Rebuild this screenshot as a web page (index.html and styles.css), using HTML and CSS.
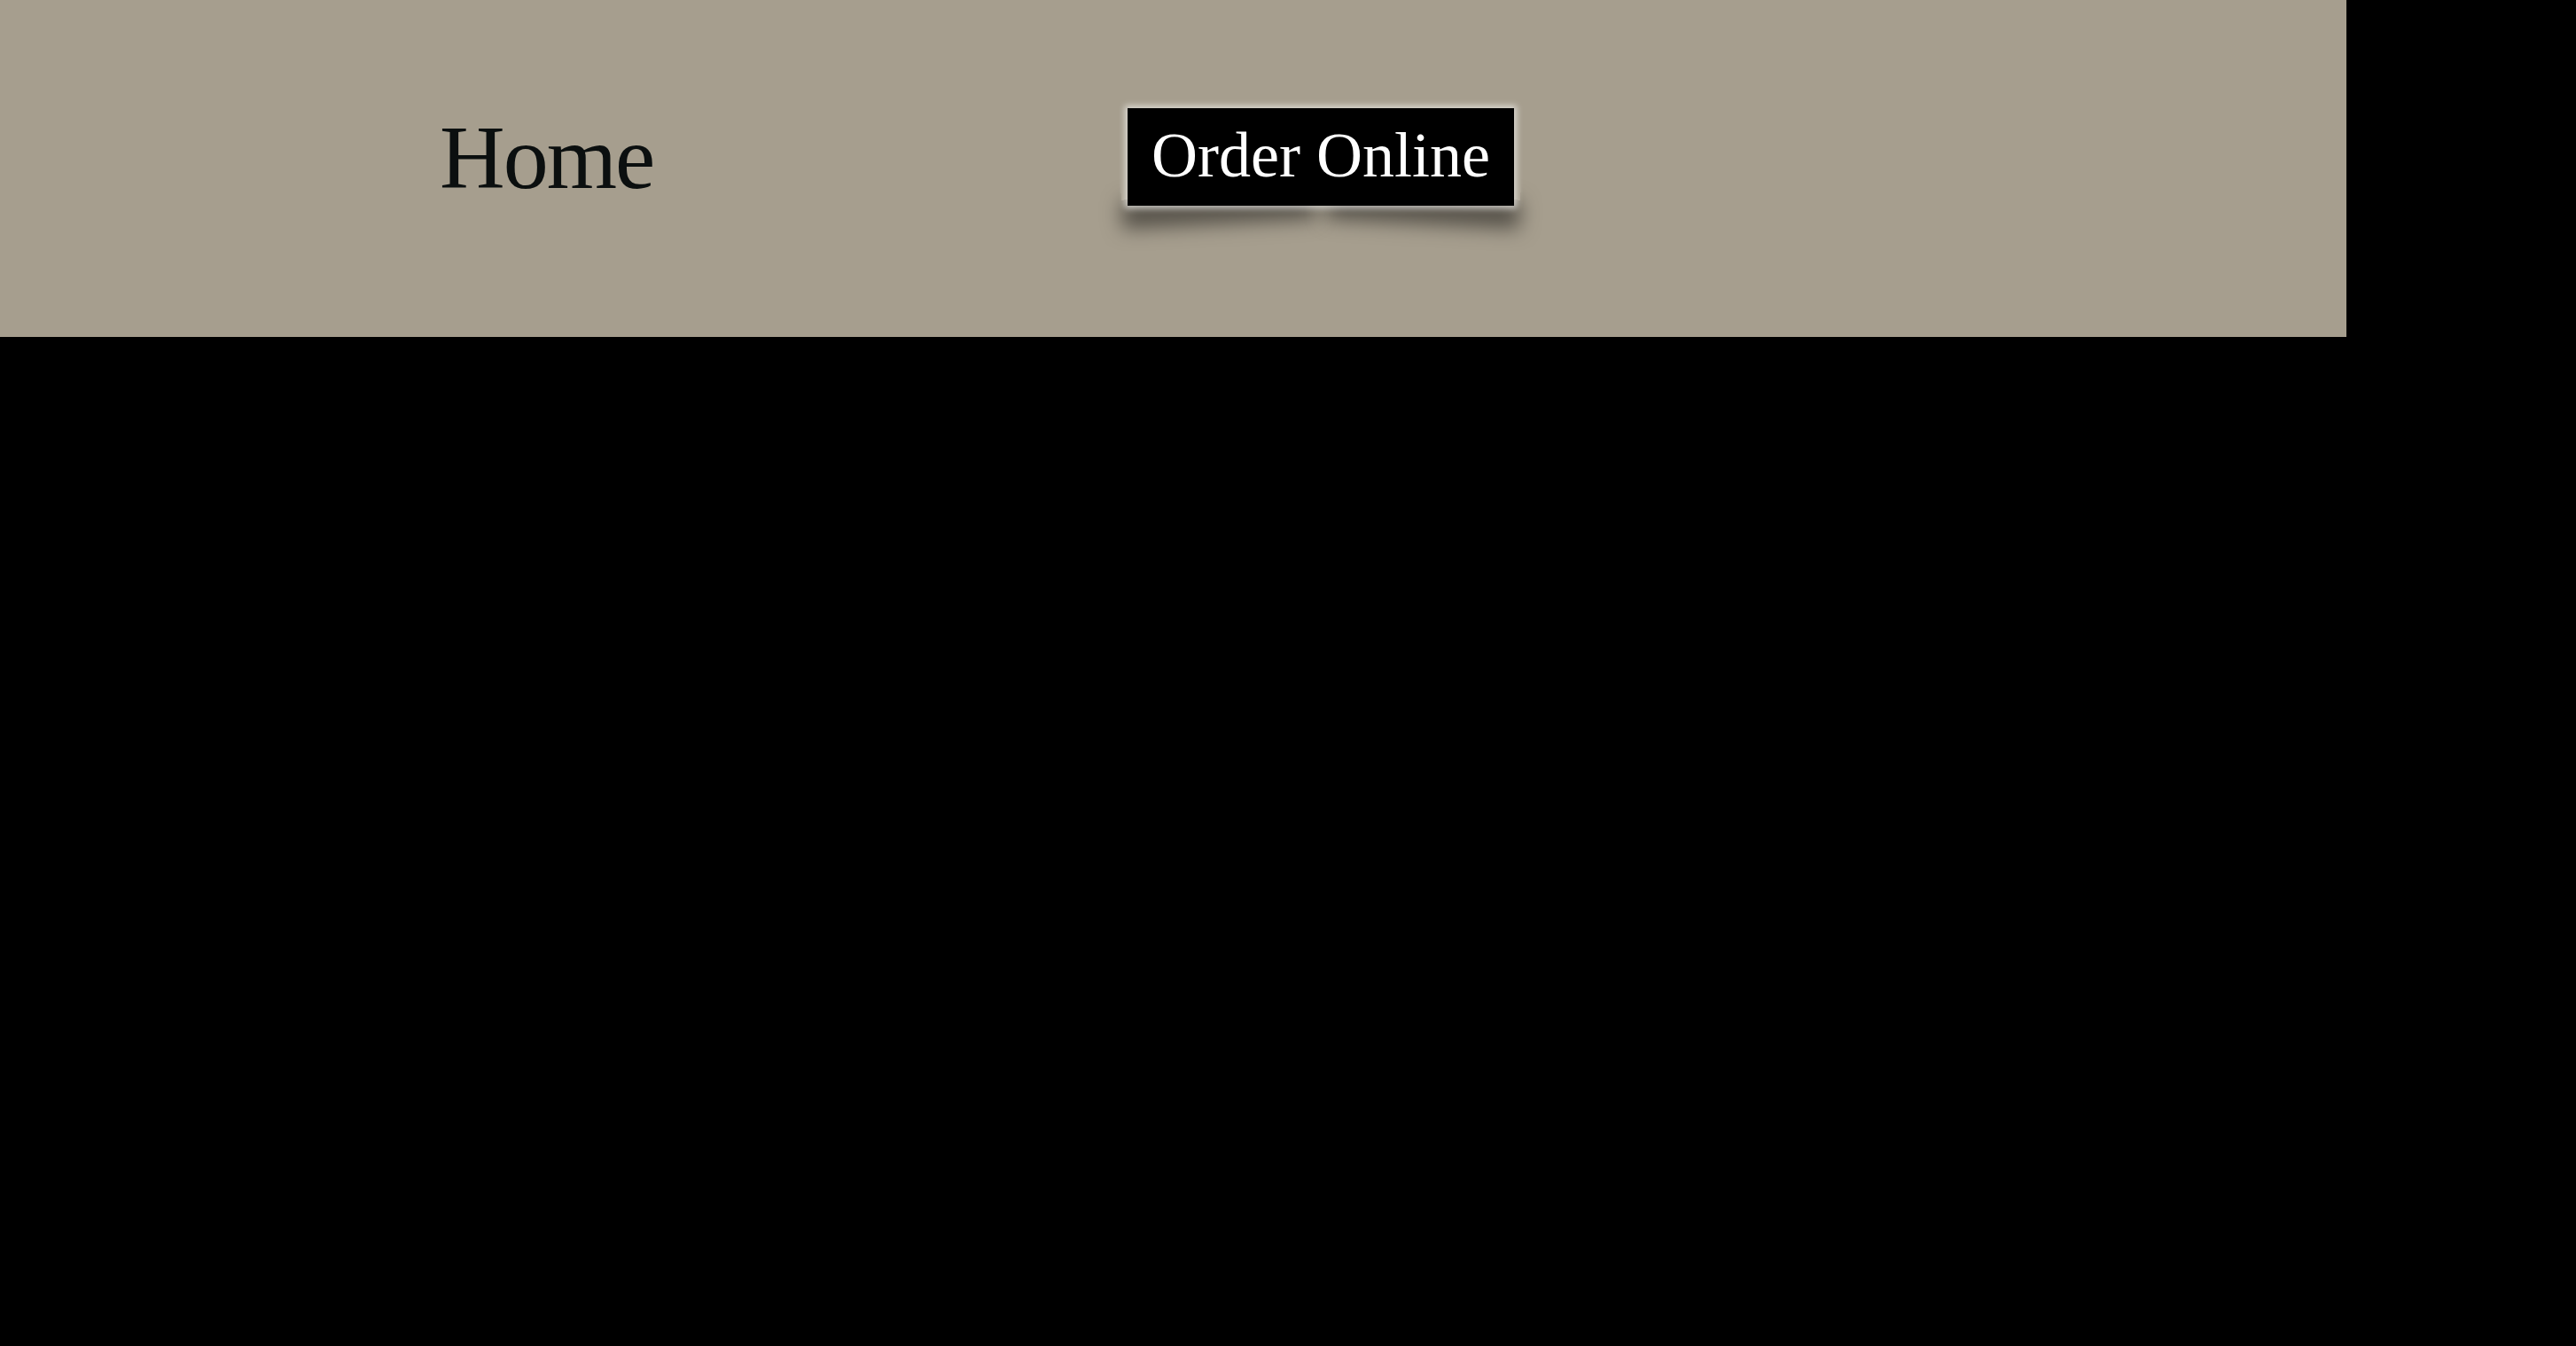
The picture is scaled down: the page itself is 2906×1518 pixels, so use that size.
FILE: index.html
```html
<!DOCTYPE html>
<html lang="en">
<head>
<meta charset="utf-8">
<title>Home</title>
<link rel="stylesheet" href="styles.css">
</head>
<body>
<header class="site-header">
  <h1 class="page-title">Home</h1>
  <a class="order-btn" href="#">Order Online</a>
</header>
</body>
</html>
```

FILE: styles.css
```css
html, body {
  margin: 0;
  padding: 0;
  background: #000;
}
body {
  width: 2906px;
  height: 1518px;
  overflow: hidden;
  font-family: "Liberation Serif", "Times New Roman", serif;
}
.site-header {
  width: 2647px;
  height: 380px;
  background: #a69e8e;
  display: flex;
  align-items: flex-start;
  padding-left: 496px;
  box-sizing: border-box;
  isolation: isolate;
}
.page-title {
  margin: 127px 0 0 0;
  width: 776px;
  font-size: 102px;
  line-height: 1;
  font-weight: normal;
  letter-spacing: -2px;
  color: #0b0f0f;
}
.order-btn {
  position: relative;
  margin-top: 122px;
  width: 436px;
  height: 110px;
  box-sizing: border-box;
  padding-top: 17px;
  background: #000;
  color: #fff;
  text-decoration: none;
  text-align: center;
  font-size: 72px;
  line-height: 1;
  box-shadow: 0 0 7px 3px rgba(255, 255, 255, 0.6);
}
.order-btn::before,
.order-btn::after {
  content: "";
  position: absolute;
  bottom: 12px;
  width: 50%;
  height: 30px;
  box-shadow: 0 32px 22px rgba(0, 0, 0, 0.5);
  z-index: -1;
}
.order-btn::before {
  left: -8px;
  transform: rotate(-3deg);
}
.order-btn::after {
  right: -8px;
  transform: rotate(3deg);
}
```
